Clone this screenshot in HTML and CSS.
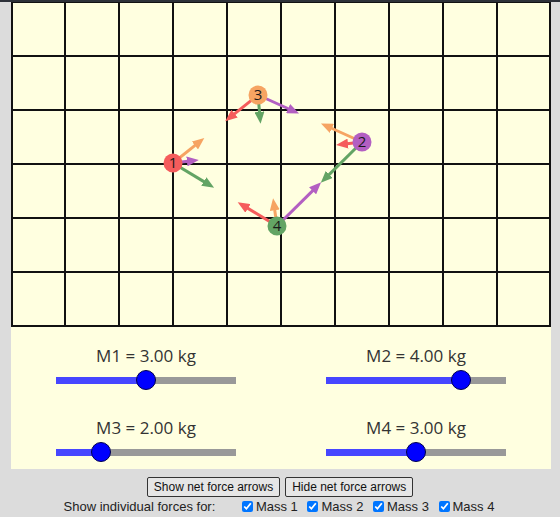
FILE: index.html
```html
<!DOCTYPE html>
<html lang="en">
<head>
    <meta charset="UTF-8">
    <meta name="viewport" content="width=device-width, initial-scale=1.0">
    <title>Four Masses</title>
    <link rel="stylesheet" href="styles.css">
</head>
<body>
    <div class="topbar"></div>
    <div class="sim">
        <svg class="board" width="540" height="325" viewBox="0 0 540 325">
            <defs>
                <marker id="head-red" markerUnits="userSpaceOnUse" markerWidth="12" markerHeight="10" refX="1" refY="5" orient="auto">
                    <path d="M0,0 L12,5 L0,10 z" fill="#f55c5c"/>
                </marker>
                <marker id="head-purple" markerUnits="userSpaceOnUse" markerWidth="12" markerHeight="10" refX="1" refY="5" orient="auto">
                    <path d="M0,0 L12,5 L0,10 z" fill="#b35fc2"/>
                </marker>
                <marker id="head-orange" markerUnits="userSpaceOnUse" markerWidth="12" markerHeight="10" refX="1" refY="5" orient="auto">
                    <path d="M0,0 L12,5 L0,10 z" fill="#f6a462"/>
                </marker>
                <marker id="head-green" markerUnits="userSpaceOnUse" markerWidth="12" markerHeight="10" refX="1" refY="5" orient="auto">
                    <path d="M0,0 L12,5 L0,10 z" fill="#63a464"/>
                </marker>
            </defs>

            <!-- grid -->
            <g class="grid">
                <line x1="0" y1="0" x2="540" y2="0"/>
                <line x1="0" y1="54" x2="540" y2="54"/>
                <line x1="0" y1="108" x2="540" y2="108"/>
                <line x1="0" y1="162" x2="540" y2="162"/>
                <line x1="0" y1="216" x2="540" y2="216"/>
                <line x1="0" y1="270" x2="540" y2="270"/>
                <line x1="0" y1="324" x2="540" y2="324"/>
                <line x1="1" y1="0" x2="1" y2="325"/>
                <line x1="54" y1="0" x2="54" y2="325"/>
                <line x1="108" y1="0" x2="108" y2="325"/>
                <line x1="162" y1="0" x2="162" y2="325"/>
                <line x1="216" y1="0" x2="216" y2="325"/>
                <line x1="270" y1="0" x2="270" y2="325"/>
                <line x1="324" y1="0" x2="324" y2="325"/>
                <line x1="378" y1="0" x2="378" y2="325"/>
                <line x1="432" y1="0" x2="432" y2="325"/>
                <line x1="486" y1="0" x2="486" y2="325"/>
                <line x1="539" y1="0" x2="539" y2="325"/>
            </g>

            <!-- force arrows -->
            <g class="arrows">
                <line x1="162" y1="161" x2="184.7" y2="142.9" stroke="#f6a462" marker-end="url(#head-orange)"/>
                <line x1="162" y1="161" x2="176.9" y2="159.3" stroke="#b35fc2" marker-end="url(#head-purple)"/>
                <line x1="162" y1="161" x2="193.7" y2="180.1" stroke="#63a464" marker-end="url(#head-green)"/>

                <line x1="247" y1="93" x2="222.8" y2="112.3" stroke="#f55c5c" marker-end="url(#head-red)"/>
                <line x1="247" y1="93" x2="248.6" y2="110.8" stroke="#63a464" marker-end="url(#head-green)"/>
                <line x1="247" y1="93" x2="278" y2="107" stroke="#b35fc2" marker-end="url(#head-purple)"/>

                <line x1="351" y1="140" x2="320" y2="126" stroke="#f6a462" marker-end="url(#head-orange)"/>
                <line x1="351" y1="140" x2="336" y2="141.7" stroke="#f55c5c" marker-end="url(#head-red)"/>
                <line x1="351" y1="140" x2="317.6" y2="173.1" stroke="#63a464" marker-end="url(#head-green)"/>

                <line x1="266" y1="224" x2="236.1" y2="205.9" stroke="#f55c5c" marker-end="url(#head-red)"/>
                <line x1="266" y1="224" x2="263.6" y2="207.2" stroke="#f6a462" marker-end="url(#head-orange)"/>
                <line x1="266" y1="224" x2="302.3" y2="188.1" stroke="#b35fc2" marker-end="url(#head-purple)"/>
            </g>

            <!-- masses -->
            <g class="masses">
                <circle cx="162" cy="161" r="9.5" fill="#f55c5c"/>
                <text x="162" y="166">1</text>
                <circle cx="351" cy="140" r="9.5" fill="#b35fc2"/>
                <text x="351" y="145">2</text>
                <circle cx="247" cy="93" r="9.5" fill="#f6a462"/>
                <text x="247" y="98">3</text>
                <circle cx="266" cy="224" r="9.5" fill="#63a464"/>
                <text x="266" y="229">4</text>
            </g>
        </svg>

        <div class="controls">
            <div class="control">
                <div class="mass-label">M1 = 3.00 kg</div>
                <div class="slider">
                    <div class="track"><div class="fill" style="width: 50%;"></div></div>
                    <div class="thumb" style="left: 50%;"></div>
                </div>
            </div>
            <div class="control">
                <div class="mass-label">M2 = 4.00 kg</div>
                <div class="slider">
                    <div class="track"><div class="fill" style="width: 75%;"></div></div>
                    <div class="thumb" style="left: 75%;"></div>
                </div>
            </div>
            <div class="control">
                <div class="mass-label">M3 = 2.00 kg</div>
                <div class="slider">
                    <div class="track"><div class="fill" style="width: 25%;"></div></div>
                    <div class="thumb" style="left: 25%;"></div>
                </div>
            </div>
            <div class="control">
                <div class="mass-label">M4 = 3.00 kg</div>
                <div class="slider">
                    <div class="track"><div class="fill" style="width: 50%;"></div></div>
                    <div class="thumb" style="left: 50%;"></div>
                </div>
            </div>
        </div>
    </div>

    <div class="buttons">
        <button>Show net force arrows</button>
        <button>Hide net force arrows</button>
    </div>

    <div class="checks">
        <span class="checks-label">Show individual forces for:</span>
        <label><input type="checkbox" checked>Mass 1</label>
        <label><input type="checkbox" checked>Mass 2</label>
        <label><input type="checkbox" checked>Mass 3</label>
        <label><input type="checkbox" checked>Mass 4</label>
    </div>
</body>
</html>
```

FILE: styles.css
```css
body {
    margin: 0;
    background-color: #dcdcdc;
    font-family: "Liberation Sans", Arial, sans-serif;
    color: #222;
}
.topbar {
    height: 2px;
    background-color: #2d3139;
}
.sim {
    width: 540px;
    margin-left: 11px;
    background-color: #ffffe0;
}
.board {
    display: block;
}
.grid line {
    stroke: #111;
    stroke-width: 2;
}
.arrows line {
    stroke-width: 3;
}
.masses text {
    font-family: "Open Sans", sans-serif;
    font-size: 15px;
    fill: #1a1a1a;
    text-anchor: middle;
}
.controls {
    display: grid;
    grid-template-columns: 1fr 1fr;
    row-gap: 28px;
    padding: 19px 0 7px;
}
.control {
    display: flex;
    flex-direction: column;
    align-items: center;
}
.mass-label {
    font-family: "Open Sans", sans-serif;
    font-size: 17px;
    line-height: 20px;
    color: #333;
}
.slider {
    position: relative;
    width: 180px;
    height: 20px;
    margin-top: 4px;
}
.track {
    height: 7px;
    margin-top: 6.5px;
    background-color: #999;
}
.fill {
    height: 100%;
    background-color: #4646ff;
}
.thumb {
    position: absolute;
    top: 0;
    width: 20px;
    height: 20px;
    margin-left: -10px;
    box-sizing: border-box;
    border-radius: 50%;
    background-color: #0000ff;
    border: 1.5px solid #00004d;
}
.buttons {
    display: flex;
    justify-content: center;
    gap: 5px;
    margin-top: 8px;
}
button {
    font-family: "Liberation Sans", Arial, sans-serif;
    font-size: 12px;
    line-height: 14px;
    padding: 2px 6px;
    color: #111;
    background-color: #e6e6e6;
    border: 1px solid #333;
    border-radius: 2px;
}
.checks {
    text-align: center;
    font-size: 13px;
    line-height: 15px;
    margin-top: 2px;
}
.checks-label {
    margin-right: 19px;
}
.checks label {
    margin-right: 2px;
}
.checks input {
    width: 11px;
    height: 11px;
    margin: 0 3px 0 4px;
    vertical-align: -1px;
}
```
